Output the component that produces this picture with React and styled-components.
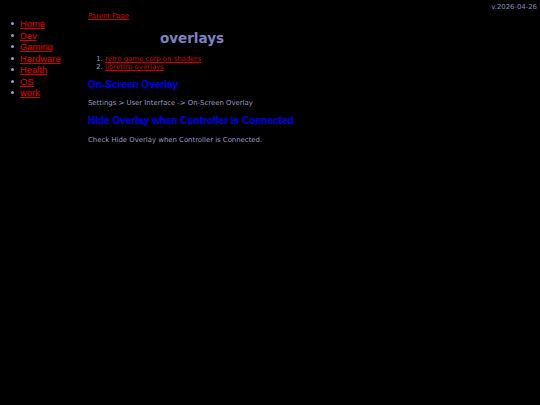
import React from "react";
import styled, { createGlobalStyle } from "styled-components";

const Global = createGlobalStyle`
  html, body { margin: 0; padding: 0; background: #000; }
  body { font-family: "DejaVu Sans", Verdana, sans-serif; color: #9a9ac0; }
`;

const Page = styled.div`
  position: relative;
  display: flex;
  align-items: flex-start;
  width: 540px;
  height: 405px;
  background: #000;
`;

const Version = styled.div`
  position: absolute;
  top: 3px;
  right: 3px;
  font-size: 6.9px;
  color: #8a8ab8;
`;

const Nav = styled.ul`
  width: 88px;
  flex: none;
  margin: 0;
  padding: 18px 0 0 20px;
  box-sizing: border-box;
  list-style: none;
  font-family: "Liberation Sans", Arial, sans-serif;
  font-size: 9.4px;
  line-height: 11.5px;
  color: #9a9ac0;
  -webkit-text-stroke: 0.15px currentColor;
`;

const NavItem = styled.li`
  display: flex;
  align-items: center;
  &::before {
    content: "";
    width: 3px;
    height: 3px;
    border-radius: 50%;
    background: #9a9ac0;
    margin-left: -9px;
    margin-right: 6px;
    flex: none;
  }
`;

const Link = styled.a`
  color: #d40000;
  text-decoration: underline;
`;

const Main = styled.div`
  width: 208px;
  padding-top: 12px;
  font-size: 6.9px;
  line-height: 8px;
`;

const Title = styled.h1`
  margin: 10px 0 0;
  text-align: center;
  font-size: 13.5px;
  line-height: 16px;
  font-weight: 700;
  color: #8080c0;
`;

const Refs = styled.ol`
  margin: 9px 0 0;
  padding-left: 17px;
  line-height: 8px;
`;

const Heading = styled.h2`
  margin: ${(p) => p.$top}px 0 0;
  font-family: "Liberation Sans", Arial, sans-serif;
  font-size: 10px;
  line-height: 12px;
  font-weight: 700;
  color: #0000cc;
  white-space: nowrap;
  -webkit-text-stroke: 0.3px #0000cc;
`;

const Text = styled.p`
  margin: ${(p) => p.$top}px 0 0;
  white-space: nowrap;
  color: #9a9ac0;
`;

const nav = ["Home", "Dev", "Gaming", "Hardware", "Health", "OS", "work"];

export default function App() {
  return (
    <>
      <Global />
      <Page>
        <Version>v.2026-04-26</Version>
        <Nav>
          {nav.map((n) => (
            <NavItem key={n}>
              <Link href="#">{n}</Link>
            </NavItem>
          ))}
        </Nav>
        <Main>
          <Link href="#">Parent Page</Link>
          <Title>overlays</Title>
          <Refs>
            <li><Link href="#">retro game corp on shaders</Link></li>
            <li><Link href="#">librettro overlays</Link></li>
          </Refs>
          <Heading $top={8}>On-Screen Overlay</Heading>
          <Text $top={8}>Settings &gt; User Interface -&gt; On-Screen Overlay</Text>
          <Heading $top={8}>Hide Overlay when Controller is Connected</Heading>
          <Text $top={9}>Check Hide Overlay when Controller is Connected.</Text>
        </Main>
      </Page>
    </>
  );
}
